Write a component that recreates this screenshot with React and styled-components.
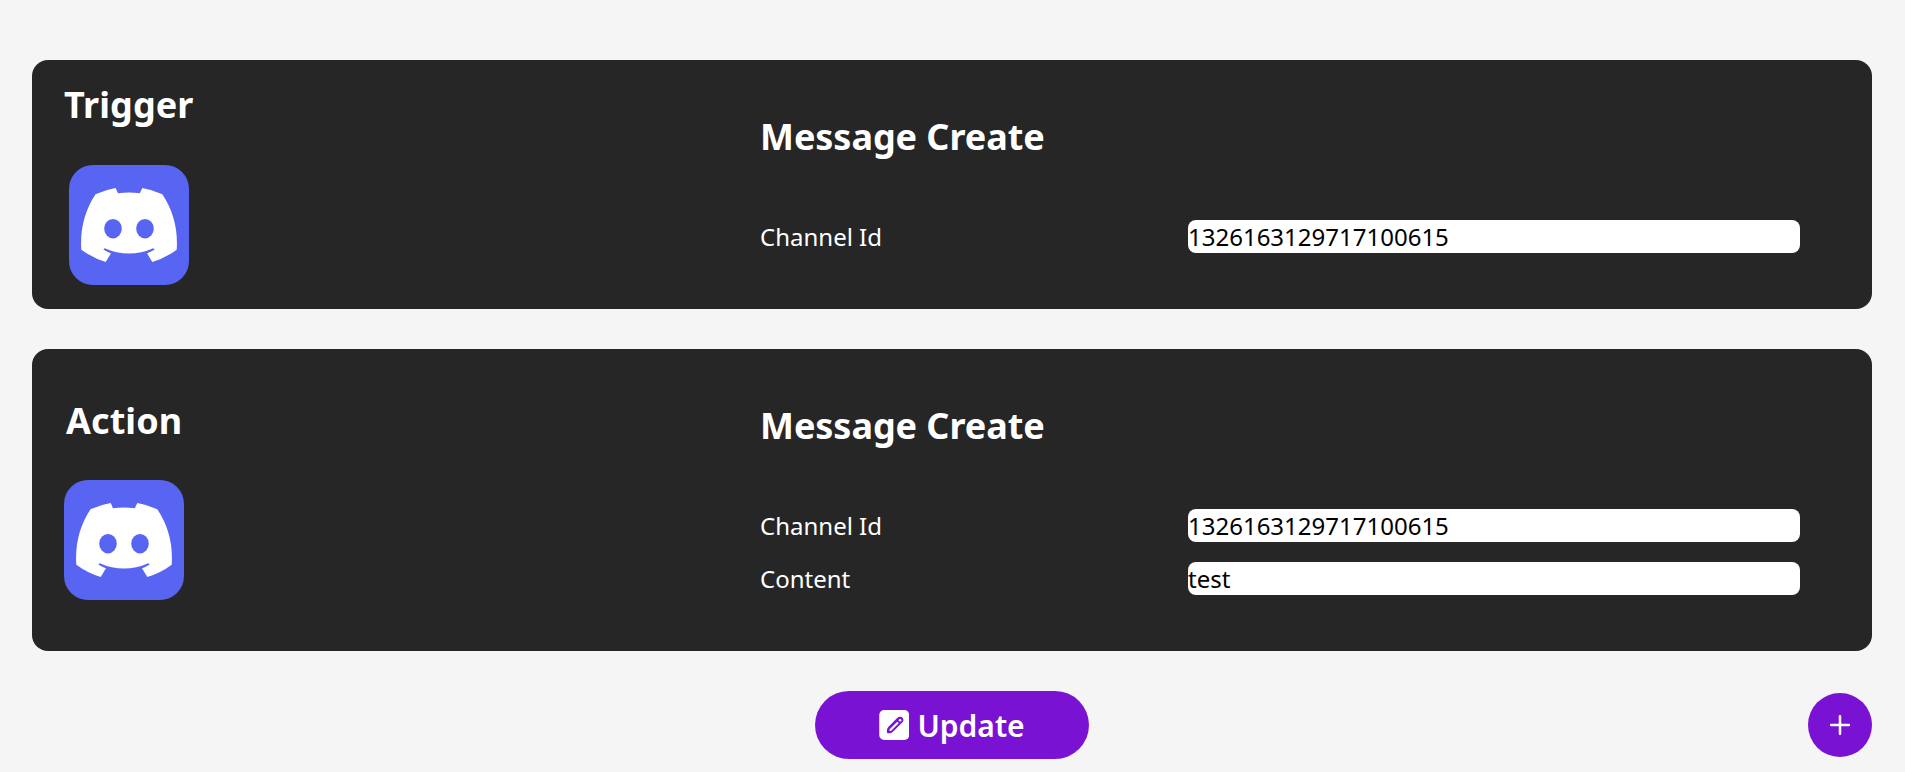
import React from "react";
import styled, { createGlobalStyle } from "styled-components";

const GlobalStyle = createGlobalStyle`
  * { box-sizing: border-box; }
  body {
    margin: 0;
    background: #f5f5f5;
    font-family: "Noto Sans", sans-serif;
    overflow: hidden;
  }
`;

const Page = styled.main`
  display: flex;
  flex-direction: column;
  gap: 40px;
  padding: 60px 33px 0 32px;
`;

const Card = styled.section`
  display: grid;
  grid-template-columns: 728px 1fr;
  height: ${(p) => p.$height}px;
  padding-right: 72px;
  border-radius: 16px;
  background: #262626;
  color: #fff;
`;

const Service = styled.div`
  display: flex;
  flex-direction: column;
  align-items: flex-start;
  padding: ${(p) => p.$top}px 0 0 32px;
`;

const Heading = styled.h2`
  margin: 0;
  font-size: 36px;
  line-height: 40px;
  font-weight: 700;
  letter-spacing: -0.05px;
`;

const ServiceTitle = styled(Heading)`
  margin: 0 0 ${(p) => p.$gap}px ${(p) => p.$indent}px;
  letter-spacing: 0.08px;
`;

const Logo = styled.svg`
  display: block;
  width: 120px;
  height: 120px;
  margin-left: ${(p) => p.$indent}px;
  border-radius: 24px;
  background: #5865f2;
`;

const Details = styled.div`
  display: flex;
  flex-direction: column;
  padding-top: 57px;
`;

const Fields = styled.div`
  display: flex;
  flex-direction: column;
  gap: 20px;
  padding-top: 63px;
`;

const Field = styled.label`
  display: grid;
  grid-template-columns: 428px 1fr;
  height: 33px;
  font-size: 24px;
  line-height: 33px;
`;

const Input = styled.input`
  min-width: 0;
  height: 33px;
  padding: 0;
  border: 0;
  border-radius: 8px;
  outline: 0;
  background: #fff;
  color: #000;
  font: inherit;
`;

const Actions = styled.footer`
  display: grid;
  grid-template-columns: 1fr auto 1fr;
  align-items: center;
`;

const UpdateButton = styled.button`
  grid-column: 2;
  display: flex;
  align-items: center;
  justify-content: center;
  gap: 8px;
  width: 274px;
  height: 68px;
  padding: 0;
  border: 0;
  border-radius: 34px;
  background: #7a12d4;
  color: #fff;
  font: 600 30px/36px "Noto Sans", sans-serif;
`;

const UpdateLabel = styled.span`
  padding-top: 2px;
`;

const AddButton = styled.button`
  justify-self: end;
  display: grid;
  place-items: center;
  width: 64px;
  height: 64px;
  padding: 0;
  border: 0;
  border-radius: 50%;
  background: #7a12d4;
  color: #fff;
`;

function DiscordLogo({ indent }) {
  return (
    <Logo $indent={indent} viewBox="0 0 120 120" aria-label="Discord">
      <path
        fill="#fff"
        d="M26.5 29.3Q36.2 24.7 46.7 23L49 28.3Q60 26.7 70.8 28.3L73.3 23Q83.8 24.7 93.3 29.3Q109.8 54 107.7 84.7Q96.5 93 83.3 97L78 88.3Q82 86.8 85.7 84.5L84.3 83.2Q60 94 35.7 83.2L34.3 84.5Q38 86.8 42 88.3L36.7 97Q23.7 93 12.3 84.7Q10.2 54 26.5 29.3Z"
      />
      <ellipse cx="44" cy="63.7" rx="8.8" ry="9.7" fill="#5865f2" />
      <ellipse cx="76" cy="63.7" rx="8.8" ry="9.7" fill="#5865f2" />
    </Logo>
  );
}

function EditIcon() {
  return (
    <svg width="30" height="30" viewBox="-0.25 0 30 30" aria-hidden="true">
      <rect width="30" height="30" rx="5" fill="#fff" />
      <path
        fill="#7a12d4"
        d="M7.7 20Q7.8 18.3 9 17L18.2 7.8Q20.1 6.2 22.5 6.9Q24.6 8.1 24.1 10.5Q23.8 11.7 22.7 12.8L13.4 22Q12 23.2 10.2 23.2H8.7Q7.7 23.2 7.7 22.2Z"
      />
      <path d="M11.2 20L18.2 13" stroke="#fff" strokeWidth="2.1" strokeLinecap="round" />
      <circle cx="20.8" cy="10.2" r="1.3" fill="#fff" />
    </svg>
  );
}

function ServiceCard({ title, fields, height, top, gap, titleIndent, logoIndent }) {
  return (
    <Card $height={height}>
      <Service $top={top}>
        <ServiceTitle $gap={gap} $indent={titleIndent}>{title}</ServiceTitle>
        <DiscordLogo indent={logoIndent} />
      </Service>
      <Details>
        <Heading>Message Create</Heading>
        <Fields>
          {fields.map(([label, value]) => (
            <Field key={label}>
              <span>{label}</span>
              <Input defaultValue={value} />
            </Field>
          ))}
        </Fields>
      </Details>
    </Card>
  );
}

export default function App() {
  return (
    <>
      <GlobalStyle />
      <Page>
        <ServiceCard
          title="Trigger"
          height={249}
          top={25}
          gap={40}
          titleIndent={0}
          logoIndent={5}
          fields={[["Channel Id", "1326163129717100615"]]}
        />
        <ServiceCard
          title="Action"
          height={302}
          top={52}
          gap={39}
          titleIndent={2}
          logoIndent={0}
          fields={[
            ["Channel Id", "1326163129717100615"],
            ["Content", "test"],
          ]}
        />
        <Actions>
          <UpdateButton type="button">
            <EditIcon />
            <UpdateLabel>Update</UpdateLabel>
          </UpdateButton>
          <AddButton type="button" aria-label="Add">
            <svg width="20" height="20" viewBox="0 0 20 20">
              <path d="M10 1.2V18.8M1.2 10H18.8" stroke="#fff" strokeWidth="2.5" strokeLinecap="round" />
            </svg>
          </AddButton>
        </Actions>
      </Page>
    </>
  );
}
